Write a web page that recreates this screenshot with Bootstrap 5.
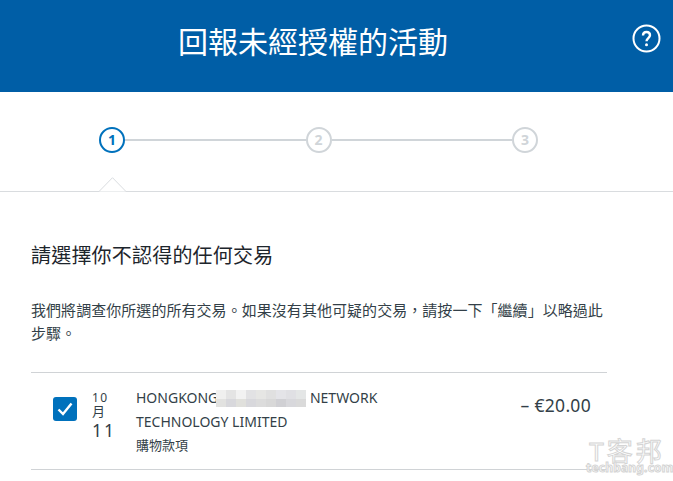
<!DOCTYPE html>
<html lang="zh-Hant">
<head>
    <meta charset="UTF-8">
    <meta name="viewport" content="width=device-width, initial-scale=1.0">
    <title>回報未經授權的活動</title>
    <link href="https://cdn.jsdelivr.net/npm/bootstrap@5.3.0/dist/css/bootstrap.min.css" rel="stylesheet">
    <style>
        html, body { height: 100%; overflow: hidden; }
        body { font-family: "Noto Sans", "Noto Sans CJK TC", sans-serif; color: #333f48; background: #fff; position: relative; }
        .top-bar { height: 92px; background: #005ea6; padding: 25px 0 0 0; }
        .top-title { font-size: 30px; line-height: 34px; font-weight: 400; color: #fff; margin: 0 47px 0 0; text-align: center; }
        .help-btn { position: absolute; left: 632px; top: 24px; width: 29px; height: 29px; }
        .stepper { height: 100px; padding: 35px 0 0 99px; border-bottom: 1px solid #d9dcdf; position: relative; }
        .step-dot { width: 26px; height: 26px; border: 2px solid #d0d5d9; border-radius: 50%; color: #d0d5d9; font-size: 14px; font-weight: 700; line-height: 21px; text-align: center; background: #fff; flex: none; }
        .step-dot.is-on { border-color: #0071bc; color: #0071bc; }
        .step-line { width: 180.5px; height: 2px; background: #d0d5d9; flex: none; }
        .step-notch { position: absolute; left: 99px; top: 85px; }
        .page-body { padding: 49px 66px 0 31px; }
        .pick-title { font-size: 20px; line-height: 30px; font-weight: 400; letter-spacing: .2px; color: #1d252c; margin: 0 0 28px 0; }
        .pick-text { font-size: 15px; line-height: 23px; letter-spacing: .05px; margin: 0 0 27px 0; color: #333f48; }
        .tx-row { height: 98px; border-top: 1px solid #d0d3d6; border-bottom: 1px solid #d0d3d6; padding-top: 13px; }
        .tx-check { width: 24px; height: 24px; border-radius: 3px; background: #0071bc; margin: 11px 15px 0 22px; flex: none; display: flex; align-items: center; justify-content: center; }
        .tx-date { width: 44px; flex: none; padding-top: 5px; }
        .tx-mon { font-size: 12px; line-height: 13px; letter-spacing: 1.5px; }
        .tx-moon { font-size: 13px; line-height: 15px; }
        .tx-day { font-size: 17.5px; line-height: 22px; letter-spacing: 2px; }
        .tx-info { width: 290px; font-size: 14px; line-height: 24px; flex: none; }
        .tx-sub { font-size: 13px; line-height: 22px; }
        .blur-box { display: inline-block; vertical-align: -4px; margin-left: -2px; }
        .tx-amount { font-size: 17.5px; line-height: 24px; letter-spacing: .3px; margin-left: auto; padding: 7px 16px 0 0; white-space: nowrap; }
        .mark-wm { position: absolute; left: 586px; top: 438px; width: 82px; text-align: center; color: #fff; -webkit-text-stroke: 1px #d4d4d4; }
        .mark-wm-top { font-size: 26px; line-height: 26px; height: 25px; letter-spacing: 3px; font-weight: 400; white-space: nowrap; }
        .mark-wm-sub { font-size: 12px; line-height: 9px; font-weight: 700; letter-spacing: .2px; white-space: nowrap; }
    </style>
</head>
<body>

    <header class="top-bar">
        <h1 class="top-title">回報未經授權的活動</h1>
    </header>
    <svg class="help-btn" viewBox="0 0 29 29" fill="none">
        <circle cx="14.500" cy="14.500" r="13" stroke="#fff" stroke-width="2"/>
        <path d="M11 11.500c0-2 1.500-3.500 3.500-3.500s3.500 1.400 3.500 3.300c0 2.700-3.500 2.900-3.500 5.900" stroke="#fff" stroke-width="2.400"/>
        <circle cx="14.500" cy="20.700" r="1.500" fill="#fff"/>
    </svg>

    <div class="stepper">
        <div class="d-flex align-items-center">
            <div class="step-dot is-on">1</div>
            <div class="step-line"></div>
            <div class="step-dot">2</div>
            <div class="step-line"></div>
            <div class="step-dot">3</div>
        </div>
        <svg class="step-notch" width="27" height="15" viewBox="0 0 27 15">
            <path d="M0 14.500 13.500 .7 27 14.500" fill="#fff" stroke="#d9dcdf"/>
        </svg>
    </div>

    <main class="page-body">
        <h2 class="pick-title">請選擇你不認得的任何交易</h2>
        <p class="pick-text">我們將調查你所選的所有交易。如果沒有其他可疑的交易，請按一下「繼續」以略過此步驟。</p>

        <div class="tx-row d-flex align-items-start">
            <div class="tx-check">
                <svg width="16" height="14" viewBox="0 0 16 14" fill="none"><path d="M1.500 7.500 6 12 14.500 1.500" stroke="#fff" stroke-width="2.400"/></svg>
            </div>
            <div class="tx-date">
                <div class="tx-mon">10</div>
                <div class="tx-moon">月</div>
                <div class="tx-day">11</div>
            </div>
            <div class="tx-info">
                HONGKONG<svg class="blur-box" width="90" height="17" viewBox="0 0 9 2" preserveAspectRatio="none" shape-rendering="crispEdges">
                    <rect x="0" width="1" height="1" fill="#f0f0ef"/>
                    <rect x="1" width="1" height="1" fill="#e4e4e4"/>
                    <rect x="2" width="1" height="1" fill="#f2f2f2"/>
                    <rect x="3" width="1" height="1" fill="#e2e2e4"/>
                    <rect x="4" width="1" height="1" fill="#e6e6e4"/>
                    <rect x="5" width="1" height="1" fill="#e0e0e0"/>
                    <rect x="6" width="1" height="1" fill="#e4e4e8"/>
                    <rect x="7" width="1" height="1" fill="#e0e0e4"/>
                    <rect x="8" width="1" height="1" fill="#e4e6e6"/>
                    <rect x="0" y="1" width="1" height="1" fill="#e2e2e0"/>
                    <rect x="1" y="1" width="1" height="1" fill="#d8d8dc"/>
                    <rect x="2" y="1" width="1" height="1" fill="#e0e0dc"/>
                    <rect x="3" y="1" width="1" height="1" fill="#d8d8dc"/>
                    <rect x="4" y="1" width="1" height="1" fill="#dcdcdc"/>
                    <rect x="5" y="1" width="1" height="1" fill="#d8d8d8"/>
                    <rect x="6" y="1" width="1" height="1" fill="#d0d0d4"/>
                    <rect x="7" y="1" width="1" height="1" fill="#d8d8dc"/>
                    <rect x="8" y="1" width="1" height="1" fill="#dadada"/>
                </svg> NETWORK TECHNOLOGY LIMITED
                <div class="tx-sub">購物款項</div>
            </div>
            <div class="tx-amount">– €20.00</div>
        </div>
    </main>

    <div class="mark-wm">
        <div class="mark-wm-top">T客邦</div>
        <div class="mark-wm-sub">techbang.com</div>
    </div>

</body>
</html>
